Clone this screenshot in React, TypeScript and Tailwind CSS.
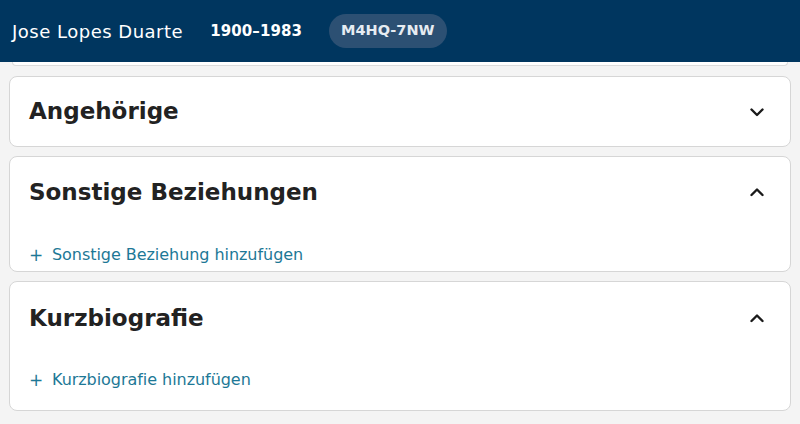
import React from 'react';

function Chevron({ up }: { up?: boolean }) {
  return (
    <svg width="16" height="16" viewBox="0 0 16 16" fill="none" stroke="#1a1a1a" strokeWidth={2.4} strokeLinecap="round" strokeLinejoin="round">
      {up ? <path d="M2.5 11 8 5.5l5.5 5.5" /> : <path d="M2.5 5.5 8 11l5.5-5.5" />}
    </svg>
  );
}

function AddLink({ label }: { label: string }) {
  return (
    <div className="flex items-center text-[16px] text-[#1d7896] leading-5">
      <span className="w-[23px] text-[17px]">+</span>
      <span className="tracking-[-0.05px]">{label}</span>
    </div>
  );
}

export default function App() {
  return (
    <div className="w-[800px] h-[424px] overflow-hidden bg-[#f4f4f4]" style={{ fontFamily: '"DejaVu Sans", Verdana, sans-serif' }}>
      <header className="h-[62px] bg-[#00365f] flex items-center px-3 text-white">
        <span className="text-[18px] tracking-[0.5px]">Jose Lopes Duarte</span>
        <span className="ml-[27px] text-[15px] font-bold tracking-[0.1px]">1900–1983</span>
        <span className="ml-[27px] h-[34px] px-[12px] rounded-full bg-[#2c5073] text-[#e6ecf2] text-[14.5px] font-bold flex items-center">M4HQ-7NW</span>
      </header>

      <div className="px-[9px]">
        <div className="h-[4px] mx-[3px] bg-white border border-t-0 border-[#dcdcdc] rounded-b-lg" />

        <div className="mt-[10px] flex flex-col gap-[9px]">
          <section className="h-[71px] bg-white border border-[#d6d6d6] rounded-lg flex items-center justify-between pl-[19px] pr-[25px]">
            <h2 className="text-[23px] font-bold text-[#222]">Angehörige</h2>
            <Chevron />
          </section>

          <section className="h-[116px] bg-white border border-[#d6d6d6] rounded-lg pl-[19px] pr-[25px] flex flex-col">
            <div className="h-[70px] flex items-center justify-between">
              <h2 className="text-[23px] font-bold text-[#222]">Sonstige Beziehungen</h2>
              <Chevron up />
            </div>
            <div className="mt-[18px]">
              <AddLink label="Sonstige Beziehung hinzufügen" />
            </div>
          </section>

          <section className="h-[130px] bg-white border border-[#d6d6d6] rounded-lg pl-[19px] pr-[25px] flex flex-col">
            <div className="h-[72px] flex items-center justify-between">
              <h2 className="text-[23px] font-bold text-[#222]">Kurzbiografie</h2>
              <Chevron up />
            </div>
            <div className="mt-[16px]">
              <AddLink label="Kurzbiografie hinzufügen" />
            </div>
          </section>
        </div>
      </div>
    </div>
  );
}
